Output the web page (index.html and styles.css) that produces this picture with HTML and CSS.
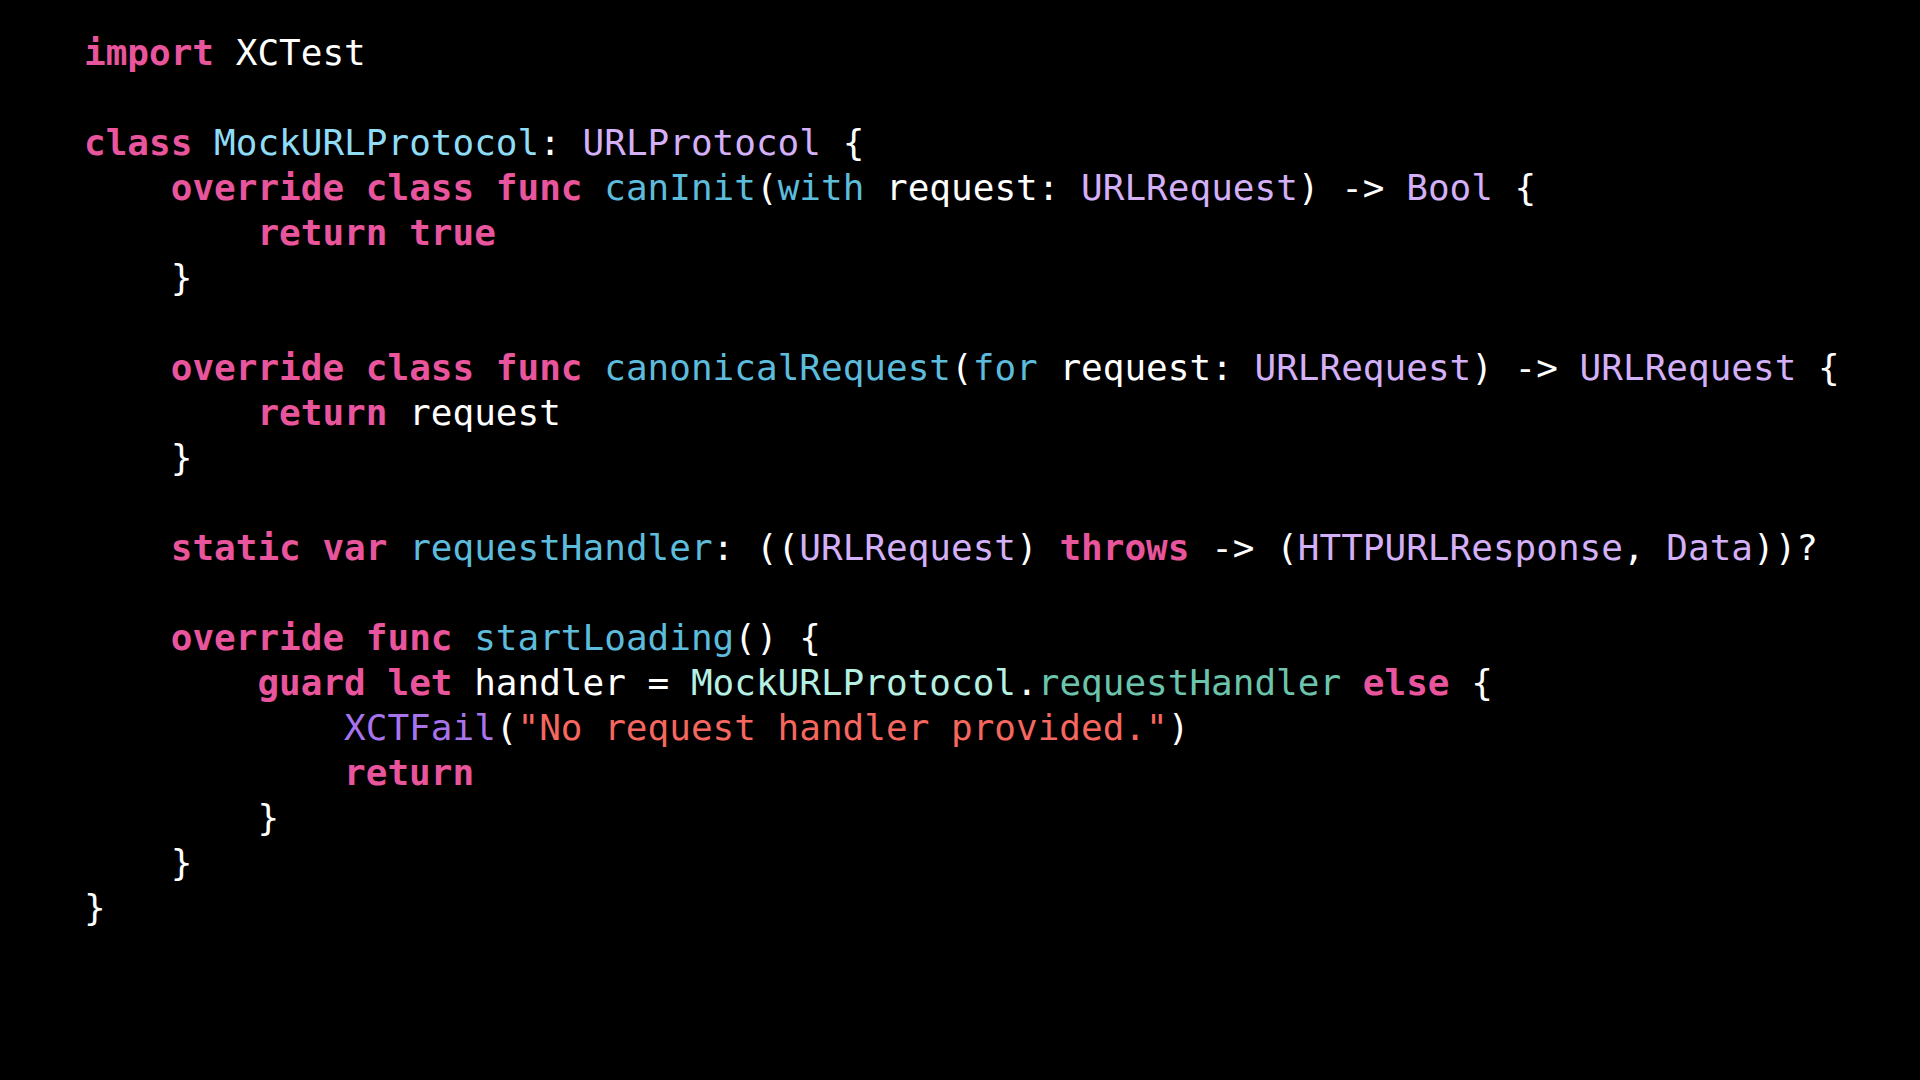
FILE: index.html
```html
<!DOCTYPE html>
<html lang="en">
<head>
<meta charset="utf-8">
<title>MockURLProtocol</title>
<link rel="stylesheet" href="styles.css">
</head>
<body>
<pre class="code"><span class="kw">import</span> XCTest

<span class="kw">class</span> <span class="decl-type">MockURLProtocol</span>: <span class="type">URLProtocol</span> {
    <span class="kw">override</span> <span class="kw">class</span> <span class="kw">func</span> <span class="decl">canInit</span>(<span class="decl">with</span> request: <span class="type">URLRequest</span>) -&gt; <span class="type">Bool</span> {
        <span class="kw">return</span> <span class="kw">true</span>
    }

    <span class="kw">override</span> <span class="kw">class</span> <span class="kw">func</span> <span class="decl">canonicalRequest</span>(<span class="decl">for</span> request: <span class="type">URLRequest</span>) -&gt; <span class="type">URLRequest</span> {
        <span class="kw">return</span> request
    }

    <span class="kw">static</span> <span class="kw">var</span> <span class="decl">requestHandler</span>: ((<span class="type">URLRequest</span>) <span class="kw">throws</span> -&gt; (<span class="type">HTTPURLResponse</span>, <span class="type">Data</span>))?

    <span class="kw">override</span> <span class="kw">func</span> <span class="decl">startLoading</span>() {
        <span class="kw">guard</span> <span class="kw">let</span> handler = <span class="proj-type">MockURLProtocol</span>.<span class="proj-prop">requestHandler</span> <span class="kw">else</span> {
            <span class="fn">XCTFail</span>(<span class="str">"No request handler provided."</span>)
            <span class="kw">return</span>
        }
    }
}</pre>
</body>
</html>
```

FILE: styles.css
```css
html, body {
  margin: 0;
  padding: 0;
  background: #000000;
}

body {
  width: 1920px;
  height: 1080px;
  overflow: hidden;
}

.code {
  margin: 0;
  padding: 30px 0 0 84px;
  font-family: "DejaVu Sans Mono", "Liberation Mono", monospace;
  font-size: 36px;
  line-height: 45px;
  color: #ffffff;
  white-space: pre;
}

.kw {
  color: #e8559c;
  font-weight: bold;
}

.decl-type {
  color: #8fdcf7;
}

.decl {
  color: #5dbcdc;
}

.type {
  color: #d3b0f7;
}

.proj-type {
  color: #b5f0e2;
}

.proj-prop {
  color: #6cc4ad;
}

.fn {
  color: #a874ec;
}

.str {
  color: #f5675f;
}
```
